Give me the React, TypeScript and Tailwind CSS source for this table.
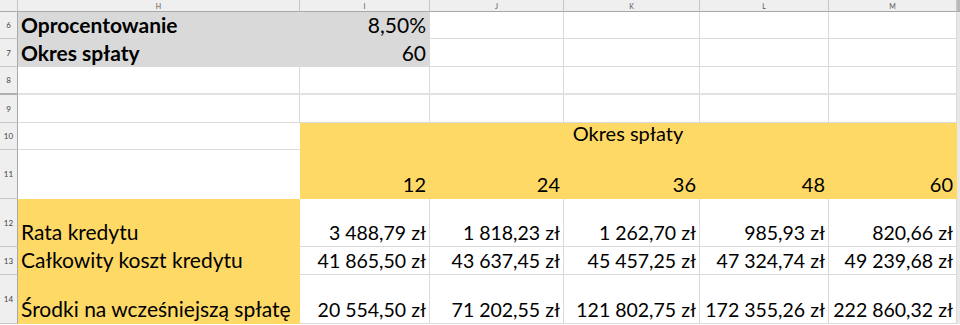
import { Fragment, type ReactNode } from "react"

type Fill = "gray" | "yellow" | undefined

const colLetters = ["H", "I", "J", "K", "L", "M"]

function ColHead({ label }: { label: string }) {
	return (
		<div className="flex items-center justify-center border-r border-b border-r-[#c8c8c8] border-b-[#a8a8a8] bg-[#efefef] pt-[1px] text-[7px] leading-none text-[#555]">
			{label}
		</div>
	)
}

function RowHead({ n, freeze }: { n: number; freeze?: boolean }) {
	return (
		<div
			className={`flex items-center justify-center border-r border-r-[#a8a8a8] bg-[#efefef] text-[8px] leading-none text-[#444] ${
				freeze ? "border-b-2 border-b-[#b0b0b0]" : "border-b border-b-[#c8c8c8]"
			}`}
		>
			{n}
		</div>
	)
}

function Cell({
	children,
	fill,
	align = "right",
	big,
	bold,
	freeze,
	className = "",
}: {
	children?: ReactNode
	fill?: Fill
	align?: "left" | "right" | "center"
	big?: boolean
	bold?: boolean
	freeze?: boolean
	className?: string
}) {
	const bg =
		fill === "gray"
			? "bg-[#d9d9d9] border-transparent"
			: fill === "yellow"
				? "bg-[#ffd966] border-transparent"
				: "bg-white border-[#dadada]"
	const justify =
		align === "left" ? "justify-start" : align === "center" ? "justify-center" : "justify-end"
	return (
		<div
			className={`flex items-end overflow-visible whitespace-nowrap border-r px-[3px] leading-none text-black ${
				freeze ? "border-b-2" : "border-b"
			} ${bg} ${justify} ${big ? "pb-[3px] text-[21px]" : "pb-[4px] text-[19.5px]"} ${
				bold ? "font-bold" : ""
			} ${className}`}
		>
			{children}
		</div>
	)
}

function Edge({ head }: { head?: boolean }) {
	return head ? (
		<div className="border-b border-b-[#a8a8a8] bg-[#b9b9b9]" />
	) : (
		<div className="bg-[#e8e8e8]" />
	)
}

const periods = ["12", "24", "36", "48", "60"]

const rows: { n: number; label: string; values: string[] }[] = [
	{
		n: 12,
		label: "Rata kredytu",
		values: ["3 488,79 zł", "1 818,23 zł", "1 262,70 zł", "985,93 zł", "820,66 zł"],
	},
	{
		n: 13,
		label: "Całkowity koszt kredytu",
		values: ["41 865,50 zł", "43 637,45 zł", "45 457,25 zł", "47 324,74 zł", "49 239,68 zł"],
	},
	{
		n: 14,
		label: "Środki na wcześniejszą spłatę",
		values: ["20 554,50 zł", "71 202,55 zł", "121 802,75 zł", "172 355,26 zł", "222 860,32 zł"],
	},
]

export default function App() {
	return (
		<div className="h-[325px] w-[960px] overflow-hidden bg-white font-['Lato',sans-serif]">
			<div className="grid grid-cols-[18px_282px_130px_134px_136px_129px_128px_3px] grid-rows-[12px_27px_28px_28px_28px_27px_49px_48px_28px_49px]">
				{/* column headers */}
				<div className="border-r border-b border-r-[#c8c8c8] border-b-[#a8a8a8] bg-[#efefef]" />
				{colLetters.map((c) => (
					<ColHead key={c} label={c} />
				))}
				<Edge head />

				{/* row 6 */}
				<RowHead n={6} />
				<Cell fill="gray" align="left" big bold>
					Oprocentowanie
				</Cell>
				<Cell fill="gray" big>
					8,50%
				</Cell>
				<Cell />
				<Cell />
				<Cell />
				<Cell />
				<Edge />

				{/* row 7 */}
				<RowHead n={7} />
				<Cell fill="gray" align="left" big bold>
					Okres spłaty
				</Cell>
				<Cell fill="gray" big>
					60
				</Cell>
				<Cell />
				<Cell />
				<Cell />
				<Cell />
				<Edge />

				{/* row 8, frozen pane line below */}
				<RowHead n={8} freeze />
				<Cell freeze className="border-b-[#e2e2e2]" />
				<Cell freeze className="border-b-[#e2e2e2]" />
				<Cell freeze className="border-b-[#e2e2e2]" />
				<Cell freeze className="border-b-[#e2e2e2]" />
				<Cell freeze className="border-b-[#e2e2e2]" />
				<Cell freeze className="border-b-[#e2e2e2]" />
				<Edge />

				{/* row 9 */}
				<RowHead n={9} />
				<Cell />
				<Cell />
				<Cell />
				<Cell />
				<Cell />
				<Cell />
				<Edge />

				{/* row 10 */}
				<RowHead n={10} />
				<Cell className="border-r-transparent" />
				<Cell fill="yellow" align="center" className="col-span-5 pb-[6px] text-[20px]">
					Okres spłaty
				</Cell>
				<Edge />

				{/* row 11 */}
				<RowHead n={11} />
				<Cell className="border-r-transparent border-b-transparent" />
				{periods.map((p) => (
					<Cell key={p} fill="yellow" className="text-[20px]">
						{p}
					</Cell>
				))}
				<Edge />

				{rows.map((r) => (
					<Fragment key={r.n}>
						<RowHead n={r.n} />
						<Cell fill="yellow" align="left" className="text-[21px]">
							{r.label}
						</Cell>
						{r.values.map((v, i) => (
							<Cell key={i}>{v}</Cell>
						))}
						<Edge />
					</Fragment>
				))}
			</div>
		</div>
	)
}
